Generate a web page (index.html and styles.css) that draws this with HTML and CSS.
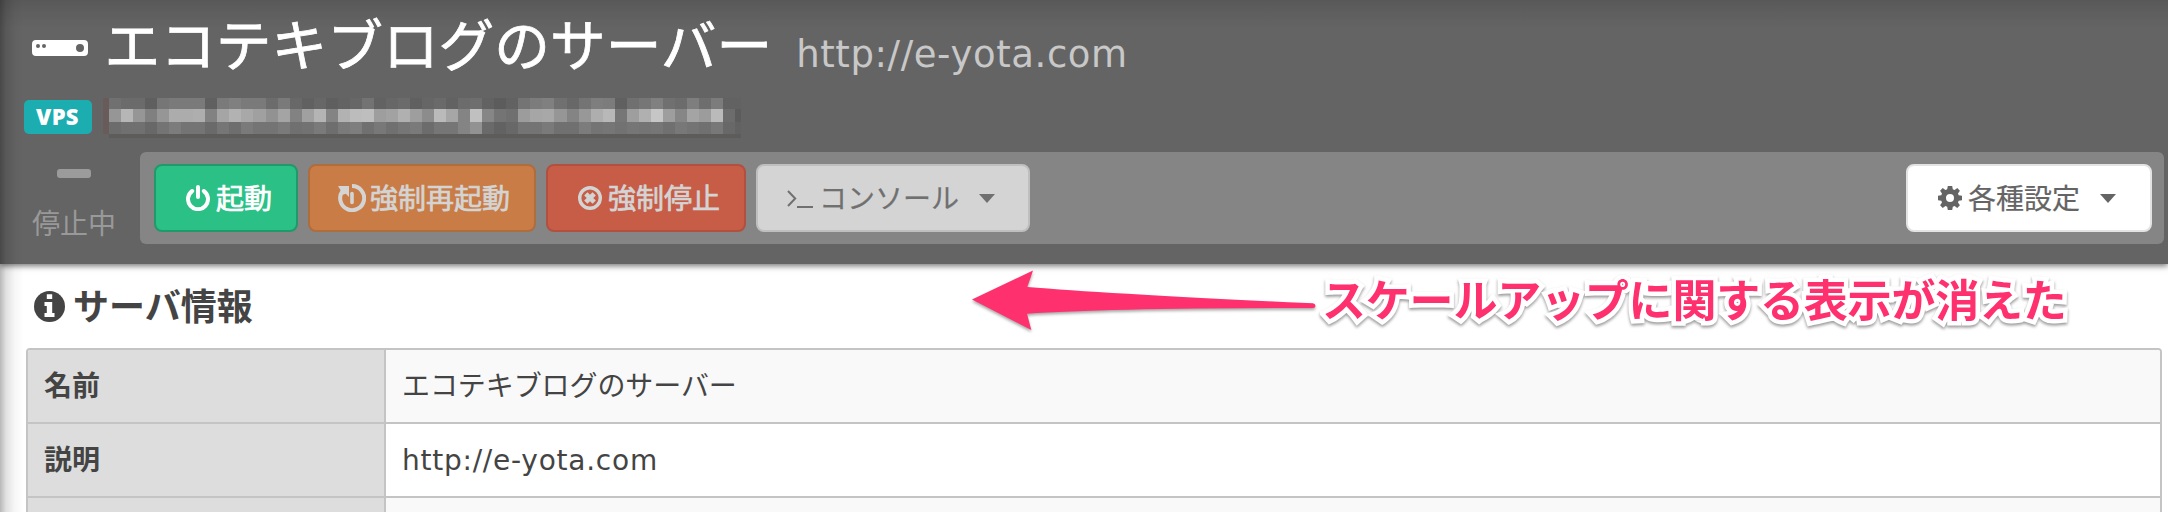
FILE: index.html
```html
<!DOCTYPE html>
<html lang="ja">
<head>
<meta charset="utf-8">
<title>エコテキブログのサーバー</title>
<link rel="stylesheet" href="styles.css">
</head>
<body>
<div class="page">
  <header class="header">
    <div class="title-row">
      <svg class="server-icon" width="56" height="16" viewBox="0 0 56 16"><path fill="#fff" fill-rule="evenodd" d="M4 0H52a4 4 0 0 1 4 4V12a4 4 0 0 1-4 4H4a4 4 0 0 1-4-4V4a4 4 0 0 1 4-4ZM6 4a2 2 0 1 0 0 4a2 2 0 1 0 0-4ZM12 4a2 2 0 1 0 0 4a2 2 0 1 0 0-4ZM48 4a4 4 0 1 0 0 8a4 4 0 1 0 0-8Z"/></svg>
      <h1 class="title">エコテキブログのサーバー</h1>
      <span class="subtitle">http://e-yota.com</span>
    </div>
    <div class="meta-row">
      <span class="badge">VPS</span>
      <svg class="mosaic" id="mosaic" width="638" height="40" viewBox="0 0 638 40" shape-rendering="crispEdges"></svg>
    </div>
    <div class="control-row">
      <div class="status"><span class="status-mark"></span><span class="status-text">停止中</span></div>
      <div class="toolbar">
        <button class="btn start">
          <svg width="24" height="26" viewBox="0 0 24 26" fill="none" stroke="currentColor" stroke-width="4" stroke-linecap="round"><path d="M6.2 6A10 10 0 1 0 17.8 6M12 2V12"/></svg><span class="label">起動</span>
        </button>
        <button class="btn restart">
          <svg width="28" height="28" viewBox="0 0 28 28"><path fill="none" stroke="currentColor" stroke-width="4" d="M14 2.1A12 12 0 1 1 4.5 7" /><path fill="currentColor" d="M0 2H11V13L7.8 9.8L4 11L2.5 6Z"/><path stroke="currentColor" stroke-width="3.6" stroke-linecap="round" d="M14 9.5V18.5"/></svg><span class="label">強制再起動</span>
        </button>
        <button class="btn stop">
          <svg width="24" height="24" viewBox="0 0 24 24" fill="none" stroke="currentColor"><circle cx="12" cy="12" r="10.3" stroke-width="3.4"/><path stroke-width="4.6" d="M7.8 7.8L16.2 16.2M16.2 7.8L7.8 16.2"/></svg><span class="label">強制停止</span>
        </button>
        <button class="btn console">
          <svg width="27" height="18" viewBox="0 0 27 18" fill="none" stroke="currentColor" stroke-width="2"><path d="M1 1L8.2 8.5L1 16M10 17H26"/></svg><span class="label">コンソール</span><span class="caret"></span>
        </button>
        <button class="btn settings">
          <svg width="24" height="24" viewBox="-12 -12 24 24" fill="currentColor"><path fill-rule="evenodd" d="M-2.2 -12H2.2L2.8 -8.7L4.6 -8L7.3 -9.9L9.9 -7.3L8 -4.6L8.7 -2.8L12 -2.2V2.2L8.7 2.8L8 4.6L9.9 7.3L7.3 9.9L4.6 8L2.8 8.7L2.2 12H-2.2L-2.8 8.7L-4.6 8L-7.3 9.9L-9.9 7.3L-8 4.6L-8.7 2.8L-12 2.2V-2.2L-8.7 -2.8L-8 -4.6L-9.9 -7.3L-7.3 -9.9L-4.6 -8L-2.8 -8.7ZM0 -4a4 4 0 1 0 0 8a4 4 0 1 0 0-8Z"/></svg><span class="label">各種設定</span><span class="caret"></span>
        </button>
      </div>
    </div>
  </header>
  <main class="content">
    <h2 class="section-title">
      <svg width="31" height="31" viewBox="0 0 31 31"><circle cx="15.5" cy="15.5" r="15.5" fill="#444"/><path fill="#fff" d="M12.8 3.2H18.2V8H12.8ZM10.5 11H18.2V22H20.5V26H10.5V22H12.8V15H10.5Z"/></svg><span>サーバ情報</span>
    </h2>
    <div class="info-table">
      <div class="row odd"><div class="key">名前</div><div class="value">エコテキブログのサーバー</div></div>
      <div class="row"><div class="key">説明</div><div class="value latin">http://e-yota.com</div></div>
      <div class="row odd"><div class="key"></div><div class="value"></div></div>
    </div>
  </main>
  <div class="edge-shade"></div>
  <svg class="arrow" width="360" height="76" viewBox="964 262 360 76"><path fill="#ff306e" d="M972 299.5L1033 270.5L1027.3 287Q1110 294 1313 303.3Q1315.5 303.8 1315.5 306Q1315.5 308 1313 308Q1110 308 1027 313.8L1031.3 330Z"/></svg>
  <div class="callout">スケールアップに関する表示が消えた</div>
</div>
<script src="mosaic.js"></script>
</body>
</html>
```
FILE: mosaic.js
```js
// Gray levels of the pixelated address line, one list per band.
const bands = [
  { y: 0, h: 11, v: [112,107,107,95,118,122,122,122,96,122,128,122,122,108,122,104,97,103,95,99,103,115,98,103,107,96,102,106,98,108,110,98,92,98,116,124,128,112,104,116,126,124,96,112,118,128,112,108,126,110,124,98,98] },
  { y: 11, h: 13, v: [150,182,150,128,150,172,172,174,130,165,178,168,160,146,164,130,160,180,132,178,188,190,158,162,176,158,140,186,166,132,192,134,116,112,156,166,168,150,132,152,174,184,118,158,176,198,158,134,164,156,186,108,92] },
  { y: 24, h: 12, v: [108,112,112,104,116,124,116,116,106,118,110,122,116,116,122,112,114,122,110,122,126,112,120,112,118,122,108,118,118,132,146,106,98,104,116,116,122,112,112,124,116,118,114,118,116,118,112,120,116,112,120,104,98] }
];
const svg = document.getElementById("mosaic");
function rect(x, y, w, h, fill) {
  const r = document.createElementNS("http://www.w3.org/2000/svg", "rect");
  Object.entries({ x, y, width: w, height: h, fill }).forEach(([k, v]) => r.setAttribute(k, v));
  svg.appendChild(r);
}
rect(0, 0, 6, 36, "#6a5b5b");
rect(6, 36, 632, 4, "#5e5c5b");
bands.forEach(b => b.v.forEach((g, i) => rect(6 + i * 12.04, b.y, i === 52 ? 6 : 12.04, b.h, `rgb(${g},${g},${g})`)));
```
FILE: styles.css
```css
* { box-sizing: border-box; }
body { margin: 0; background: #fff; color: #444; font-family: "Noto Sans CJK JP", sans-serif; }
h1, h2 { margin: 0; }
.page { position: relative; width: 2168px; height: 512px; overflow: hidden; }
.header { height: 264px; background: linear-gradient(#585858, #5e5e5e 12px, #646464 28px); box-shadow: 0 2px 6px rgba(0,0,0,.55); }
.title-row { display: flex; height: 92px; padding: 0 0 0 32px; align-items: flex-start; }
.server-icon { margin-top: 40px; flex: none; }
.title { margin-left: 16.5px; font-size: 55.7px; line-height: 84px; font-weight: 400; color: #fff; white-space: nowrap; -webkit-text-stroke: .8px #fff; }
.subtitle { margin-left: 24px; padding-top: 27px; font: 37px/56px "DejaVu Sans", sans-serif; letter-spacing: .6px; color: #c8c8c8; }
.meta-row { display: flex; height: 60px; padding: 6px 0 0 24px; align-items: flex-start; }
.badge { width: 68px; height: 34px; margin-top: 2px; padding-right: 1px; border-radius: 5px; background: #1cadb0; color: #fff; text-align: center; font: 800 22px/32px "Open Sans", sans-serif; letter-spacing: .3px; }
.mosaic { margin-left: 11px; }
.control-row { display: flex; padding-right: 4px; }
.status { width: 140px; height: 92px; padding-left: 8px; display: flex; flex-direction: column; align-items: center; color: #999; }
.status-mark { width: 34px; height: 9px; margin-top: 17px; border-radius: 3px; background: #9b9b9b; }
.status-text { margin-top: 23px; font-size: 28px; line-height: 42px; }
.toolbar { flex: 1; height: 92px; padding: 12px 12px 12px 14px; display: flex; gap: 10px; border-radius: 6px; background: #858585; }
.btn { display: flex; align-items: center; height: 68px; padding: 0 0 0 30px; border: 2px solid; border-radius: 8px; font: 28px/40px "Noto Sans CJK JP", sans-serif; white-space: nowrap; }
.btn svg { flex: none; }
.btn .label { margin-left: 6px; padding-bottom: 2px; -webkit-text-stroke: .7px currentColor; }
.start { width: 144px; background: #2bc085; border-color: #21996a; color: #fff; }
.restart { width: 228px; padding-left: 28px; background: #c97c45; border-color: #af6c3d; color: #d4d4d4; }
.restart .label { margin-left: 4px; }
.stop { width: 200px; background: #c75d47; border-color: #b1503e; color: #d4d4d4; }
.console { width: 274px; padding-left: 29px; background: #d4d4d4; border-color: #bfbfbf; color: #707070; }
.console svg { margin-top: 2px; }
.console .label { margin-left: 5px; }
.settings { width: 246px; margin-left: auto; background: #fff; border-color: #e3e3e3; color: #646464; }
.console .label, .settings .label { -webkit-text-stroke-width: .2px; }
.caret { margin-left: 19.5px; border: 8px solid transparent; border-top: 9px solid; border-bottom: 0; }
.content { padding: 24px 6px 0 26px; }
.section-title { display: flex; align-items: center; height: 36px; padding-left: 8px; font-size: 36px; line-height: 36px; }
.section-title span { margin-left: 8px; padding-bottom: 4px; }
.info-table { margin-top: 24px; border: 2px solid #c4c4c4; border-radius: 4px; overflow: hidden; }
.row { display: flex; height: 74px; border-bottom: 2px solid #c4c4c4; font-size: 28px; line-height: 69px; }
.row.odd .value { background: #f9f9f9; }
.key { width: 358px; padding-left: 16px; border-right: 2px solid #c4c4c4; background: #ddd; font-weight: 700; }
.value { flex: 1; padding-left: 16px; letter-spacing: -.08px; }
.value.latin { font-family: "DejaVu Sans", sans-serif; letter-spacing: .75px; line-height: 73px; }
.edge-shade { position: absolute; inset: 0 auto 0 0; width: 24px; background: linear-gradient(90deg, rgba(0,0,0,.28), rgba(0,0,0,.12) 6px, rgba(0,0,0,.03) 15px, transparent); }
.arrow { position: absolute; left: 964px; top: 262px; filter: drop-shadow(0 2px 1.5px rgba(0,0,0,.35)); }
.callout { position: absolute; left: 1322px; top: 265px; font-size: 44px; line-height: 66px; font-weight: 700; letter-spacing: -.2px; color: #ff306e; white-space: nowrap; -webkit-text-stroke: 9px #fff; paint-order: stroke fill; filter: drop-shadow(0 2px 1.5px rgba(0,0,0,.4)); }
```
